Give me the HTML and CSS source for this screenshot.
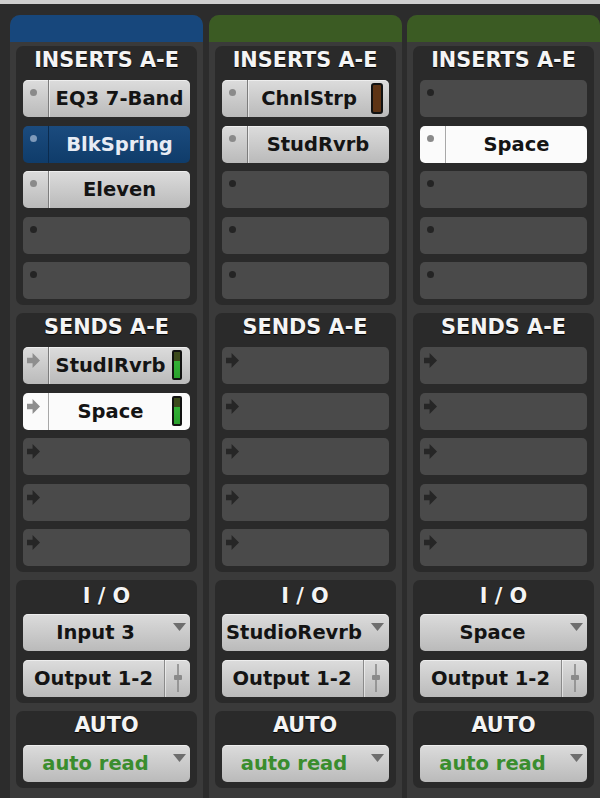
FILE: index.html
```html
<!DOCTYPE html>
<html>
<head>
<meta charset="utf-8">
<link rel="stylesheet" href="styles.css">
</head>
<body>
<svg width="0" height="0" class="defs">
  <defs>
    <symbol id="arrow" viewBox="0 0 14 16"><polygon points="0,5 6,5 6,0 14,8 6,16 6,11 0,11"/></symbol>
    <symbol id="caret" viewBox="0 0 13 8"><polygon points="0,0 13,0 6.5,8"/></symbol>
    <symbol id="fader" viewBox="0 0 10 28"><rect x="4.2" y="0" width="1.6" height="28"/><rect x="1" y="11" width="8" height="5" rx="1"/></symbol>
  </defs>
</svg>
<div class="topbar"></div>
<div class="strips">

  <div class="strip">
    <div class="hdr blue"></div>
    <div class="body">
      <section class="sec">
        <div class="ttl">INSERTS A-E</div>
        <div class="slots">
          <div class="slot grey"><span class="lc"><i class="dot"></i></span><span class="nm">EQ3 7-Band</span></div>
          <div class="slot blue"><span class="lc"><i class="dot"></i></span><span class="nm">BlkSpring</span></div>
          <div class="slot grey"><span class="lc"><i class="dot"></i></span><span class="nm">Eleven</span></div>
          <div class="slot"><span class="lc"><i class="dot"></i></span></div>
          <div class="slot"><span class="lc"><i class="dot"></i></span></div>
        </div>
      </section>
      <section class="sec">
        <div class="ttl">SENDS A-E</div>
        <div class="slots">
          <div class="slot grey"><span class="lc"><svg class="arr"><use href="#arrow"/></svg></span><span class="nm">StudIRvrb</span><span class="meter green"></span></div>
          <div class="slot white"><span class="lc"><svg class="arr"><use href="#arrow"/></svg></span><span class="nm">Space</span><span class="meter green"></span></div>
          <div class="slot"><span class="lc"><svg class="arr"><use href="#arrow"/></svg></span></div>
          <div class="slot"><span class="lc"><svg class="arr"><use href="#arrow"/></svg></span></div>
          <div class="slot"><span class="lc"><svg class="arr"><use href="#arrow"/></svg></span></div>
        </div>
      </section>
      <section class="sec io">
        <div class="ttl">I / O</div>
        <div class="slots">
          <div class="dd"><span class="nm">Input 3</span><span class="caret"><svg><use href="#caret"/></svg></span></div>
          <div class="dd"><span class="nm">Output 1-2</span><span class="fd"><svg><use href="#fader"/></svg></span></div>
        </div>
      </section>
      <section class="sec">
        <div class="ttl">AUTO</div>
        <div class="slots">
          <div class="dd auto"><span class="nm">auto read</span><span class="caret"><svg><use href="#caret"/></svg></span></div>
        </div>
      </section>
    </div>
  </div>

  <div class="strip">
    <div class="hdr green"></div>
    <div class="body">
      <section class="sec">
        <div class="ttl">INSERTS A-E</div>
        <div class="slots">
          <div class="slot grey"><span class="lc"><i class="dot"></i></span><span class="nm">ChnlStrp</span><span class="meter brown"></span></div>
          <div class="slot grey"><span class="lc"><i class="dot"></i></span><span class="nm">StudRvrb</span></div>
          <div class="slot"><span class="lc"><i class="dot"></i></span></div>
          <div class="slot"><span class="lc"><i class="dot"></i></span></div>
          <div class="slot"><span class="lc"><i class="dot"></i></span></div>
        </div>
      </section>
      <section class="sec">
        <div class="ttl">SENDS A-E</div>
        <div class="slots">
          <div class="slot"><span class="lc"><svg class="arr"><use href="#arrow"/></svg></span></div>
          <div class="slot"><span class="lc"><svg class="arr"><use href="#arrow"/></svg></span></div>
          <div class="slot"><span class="lc"><svg class="arr"><use href="#arrow"/></svg></span></div>
          <div class="slot"><span class="lc"><svg class="arr"><use href="#arrow"/></svg></span></div>
          <div class="slot"><span class="lc"><svg class="arr"><use href="#arrow"/></svg></span></div>
        </div>
      </section>
      <section class="sec io">
        <div class="ttl">I / O</div>
        <div class="slots">
          <div class="dd"><span class="nm">StudioRevrb</span><span class="caret"><svg><use href="#caret"/></svg></span></div>
          <div class="dd"><span class="nm">Output 1-2</span><span class="fd"><svg><use href="#fader"/></svg></span></div>
        </div>
      </section>
      <section class="sec">
        <div class="ttl">AUTO</div>
        <div class="slots">
          <div class="dd auto"><span class="nm">auto read</span><span class="caret"><svg><use href="#caret"/></svg></span></div>
        </div>
      </section>
    </div>
  </div>

  <div class="strip">
    <div class="hdr green"></div>
    <div class="body">
      <section class="sec">
        <div class="ttl">INSERTS A-E</div>
        <div class="slots">
          <div class="slot"><span class="lc"><i class="dot"></i></span></div>
          <div class="slot white"><span class="lc"><i class="dot"></i></span><span class="nm">Space</span></div>
          <div class="slot"><span class="lc"><i class="dot"></i></span></div>
          <div class="slot"><span class="lc"><i class="dot"></i></span></div>
          <div class="slot"><span class="lc"><i class="dot"></i></span></div>
        </div>
      </section>
      <section class="sec">
        <div class="ttl">SENDS A-E</div>
        <div class="slots">
          <div class="slot"><span class="lc"><svg class="arr"><use href="#arrow"/></svg></span></div>
          <div class="slot"><span class="lc"><svg class="arr"><use href="#arrow"/></svg></span></div>
          <div class="slot"><span class="lc"><svg class="arr"><use href="#arrow"/></svg></span></div>
          <div class="slot"><span class="lc"><svg class="arr"><use href="#arrow"/></svg></span></div>
          <div class="slot"><span class="lc"><svg class="arr"><use href="#arrow"/></svg></span></div>
        </div>
      </section>
      <section class="sec io">
        <div class="ttl">I / O</div>
        <div class="slots">
          <div class="dd"><span class="nm">Space</span><span class="caret"><svg><use href="#caret"/></svg></span></div>
          <div class="dd"><span class="nm">Output 1-2</span><span class="fd"><svg><use href="#fader"/></svg></span></div>
        </div>
      </section>
      <section class="sec">
        <div class="ttl">AUTO</div>
        <div class="slots">
          <div class="dd auto"><span class="nm">auto read</span><span class="caret"><svg><use href="#caret"/></svg></span></div>
        </div>
      </section>
    </div>
  </div>

</div>
</body>
</html>
```

FILE: styles.css
```css
html, body {
  margin: 0;
  padding: 0;
}
body {
  width: 600px;
  height: 798px;
  overflow: hidden;
  background: #2c2c2c;
  font-family: "DejaVu Sans", "Noto Sans", sans-serif;
}
.defs {
  position: absolute;
  width: 0;
  height: 0;
}
.topbar {
  height: 4px;
  background: #cfcfcf;
}
.strips {
  display: grid;
  grid-template-columns: 193px 193px 193px;
  column-gap: 5.5px;
  padding: 11px 0 0 10px;
}
.strip {
  background: #3a3a3a;
  border-radius: 10px 10px 0 0;
  height: 790px;
}
.hdr {
  height: 27px;
  border-radius: 10px 10px 0 0;
}
.hdr.blue { background: #17477c; }
.hdr.green { background: #3b5b23; }
.body {
  padding: 4px 6px 0;
  display: flex;
  flex-direction: column;
  gap: 8px;
}
.sec {
  background: #2a2a2a;
  border-radius: 7px;
  padding: 0 7px 6px;
}
.sec.io .ttl {
  padding-top: 2px;
  margin-bottom: 4px;
}
.ttl {
  height: 28px;
  line-height: 28px;
  margin-bottom: 6px;
  text-align: center;
  font-size: 20.8px;
  font-weight: bold;
  color: #f4f4f4;
  text-shadow: 0 1px 1px #000;
  white-space: nowrap;
}
.slots {
  display: flex;
  flex-direction: column;
  gap: 8.5px;
}
.slot, .dd {
  height: 37px;
  border-radius: 5px;
  display: flex;
  align-items: stretch;
  box-sizing: border-box;
  background: #4a4a4a;
  font-size: 19.5px;
  font-weight: bold;
  color: #141414;
  white-space: nowrap;
}
.lc {
  width: 26px;
  flex: none;
  position: relative;
  box-sizing: border-box;
}
.dot {
  position: absolute;
  left: 7px;
  top: 9px;
  width: 7px;
  height: 7px;
  border-radius: 50%;
  background: #242424;
}
.arr {
  position: absolute;
  left: 4px;
  top: 6px;
  width: 13px;
  height: 15px;
  fill: #262626;
}
.nm {
  flex: 1;
  text-align: center;
  line-height: 37px;
  overflow: hidden;
}
.slot.grey, .dd {
  background: linear-gradient(#dcdcdc, #bababa);
  box-shadow: inset 0 1px 0 rgba(255,255,255,0.5);
}
.slot.grey .lc, .slot.white .lc {
  border-right: 1px solid #7c7c7c;
  box-shadow: 1px 0 0 rgba(255,255,255,0.55);
}
.slot.grey .dot, .slot.white .dot { background: #8a8a8a; }
.slot.grey .arr, .slot.white .arr { fill: #8e8e8e; }
.slot.white {
  background: #fbfbfb;
}
.slot.white .lc { border-right-color: #a8a8a8; }
.slot.blue {
  background: linear-gradient(#1b4b7e, #0f3c6a);
  color: #e8ecf4;
}
.slot.blue .lc { border-right: 1px solid #0b2b4e; }
.slot.blue .dot { background: #7f9aba; }
.meter {
  flex: none;
  box-sizing: border-box;
}
.meter.green {
  width: 10px;
  margin: 3px 8px 4px 0;
  border: 2px solid #121212;
  border-radius: 2px;
  background: linear-gradient(to bottom, #3c4a1c 0, #3c4a1c 33%, #33b236 33%, #2aa02c 100%);
}
.meter.brown {
  width: 12px;
  margin: 3px 6px 3px 0;
  border: 2px solid #121212;
  border-radius: 3px;
  background: #5e3415;
}
.caret {
  width: 22px;
  flex: none;
  display: flex;
  justify-content: center;
  align-items: flex-start;
  padding-top: 9px;
}
.caret svg {
  width: 13px;
  height: 8px;
  fill: #6e6e6e;
}
.fd {
  width: 25px;
  flex: none;
  display: flex;
  justify-content: center;
  align-items: center;
  border-left: 1px solid #8a8a8a;
  box-shadow: inset 1px 0 0 rgba(255,255,255,0.5);
}
.fd svg {
  width: 10px;
  height: 28px;
  fill: #8a8a8a;
}
.dd.auto .nm {
  color: #3a8d2e;
}
```
